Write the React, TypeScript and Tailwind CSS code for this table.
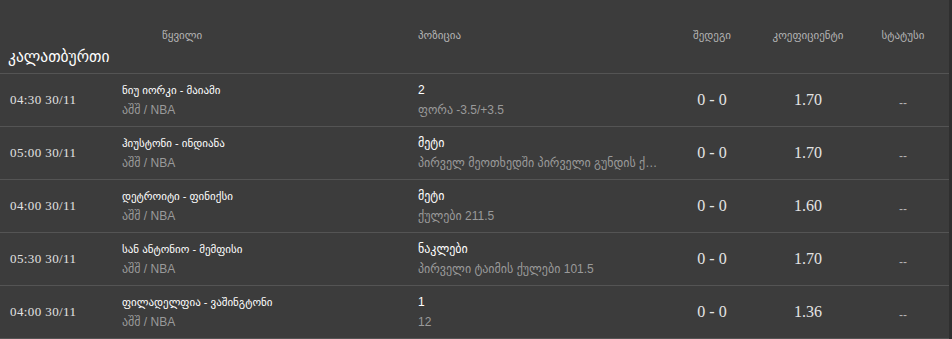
import React from "react";

const rows = [
    { time: "04:30 30/11", match: "ნიუ იორკი - მაიამი", league: "აშშ / NBA", pick: "2", market: "ფორა -3.5/+3.5", score: "0 - 0", odd: "1.70" },
    { time: "05:00 30/11", match: "ჰიუსტონი - ინდიანა", league: "აშშ / NBA", pick: "მეტი", market: "პირველ მეოთხედში პირველი გუნდის ქულები 27.5", score: "0 - 0", odd: "1.70" },
    { time: "04:00 30/11", match: "დეტროიტი - ფინიქსი", league: "აშშ / NBA", pick: "მეტი", market: "ქულები 211.5", score: "0 - 0", odd: "1.60" },
    { time: "05:30 30/11", match: "სან ანტონიო - მემფისი", league: "აშშ / NBA", pick: "ნაკლები", market: "პირველი ტაიმის ქულები 101.5", score: "0 - 0", odd: "1.70" },
    { time: "04:00 30/11", match: "ფილადელფია - ვაშინგტონი", league: "აშშ / NBA", pick: "1", market: "12", score: "0 - 0", odd: "1.36" },
];

export default function App() {
    return (
        <div className="w-[952px] h-[339px] overflow-hidden bg-[#3c3c3c] flex font-[family-name:Liberation_Sans,DejaVu_Sans,sans-serif]">
            <div className="w-[949px] shrink-0">
                <div className="h-[74px] border-b border-[#545454] flex flex-col">
                    <div className="flex pt-[27px] text-[11px] text-[#b4b4b4] leading-4">
                        <div className="w-[418px] shrink-0 pl-[162px]">წყვილი</div>
                        <div className="w-[250px] shrink-0">პოზიცია</div>
                        <div className="w-[88px] shrink-0 text-center">შედეგი</div>
                        <div className="w-[104px] shrink-0 text-center">კოეფიციენტი</div>
                        <div className="w-[86px] shrink-0 text-center">სტატუსი</div>
                    </div>
                    <div className="pl-[8px] pt-[4px] text-[15.5px] text-white leading-5">კალათბურთი</div>
                </div>
                {rows.map((r, i) => (
                    <div key={i} className="h-[53px] border-b border-[#545454] flex items-center">
                        <div className="w-[122px] shrink-0 pl-[10px] text-[13px] tracking-[0.4px] text-[#e2e2e2] font-[family-name:Liberation_Serif,DejaVu_Serif,serif]">{r.time}</div>
                        <div className="w-[296px] shrink-0 flex flex-col">
                            <span className="text-[11px] text-white leading-5">{r.match}</span>
                            <span className="text-[12px] text-[#9a9a9a] leading-5">{r.league}</span>
                        </div>
                        <div className="w-[250px] min-w-0 shrink-0 flex flex-col pr-[6px]">
                            <span className="text-[12px] text-white leading-5">{r.pick}</span>
                            <span className="text-[12px] text-[#9a9a9a] leading-5 truncate">{r.market}</span>
                        </div>
                        <div className="w-[88px] shrink-0 text-center text-[16px] text-[#e4e4e4] font-[family-name:Liberation_Serif,DejaVu_Serif,serif]">{r.score}</div>
                        <div className="w-[104px] shrink-0 text-center text-[16px] text-[#e4e4e4] font-[family-name:Liberation_Serif,DejaVu_Serif,serif]">{r.odd}</div>
                        <div className="w-[86px] shrink-0 text-center text-[12px] text-[#b4b4b4] pt-[5px]">--</div>
                    </div>
                ))}
            </div>
            <div className="flex-1 bg-[#2f2f2f]" />
        </div>
    );
}
